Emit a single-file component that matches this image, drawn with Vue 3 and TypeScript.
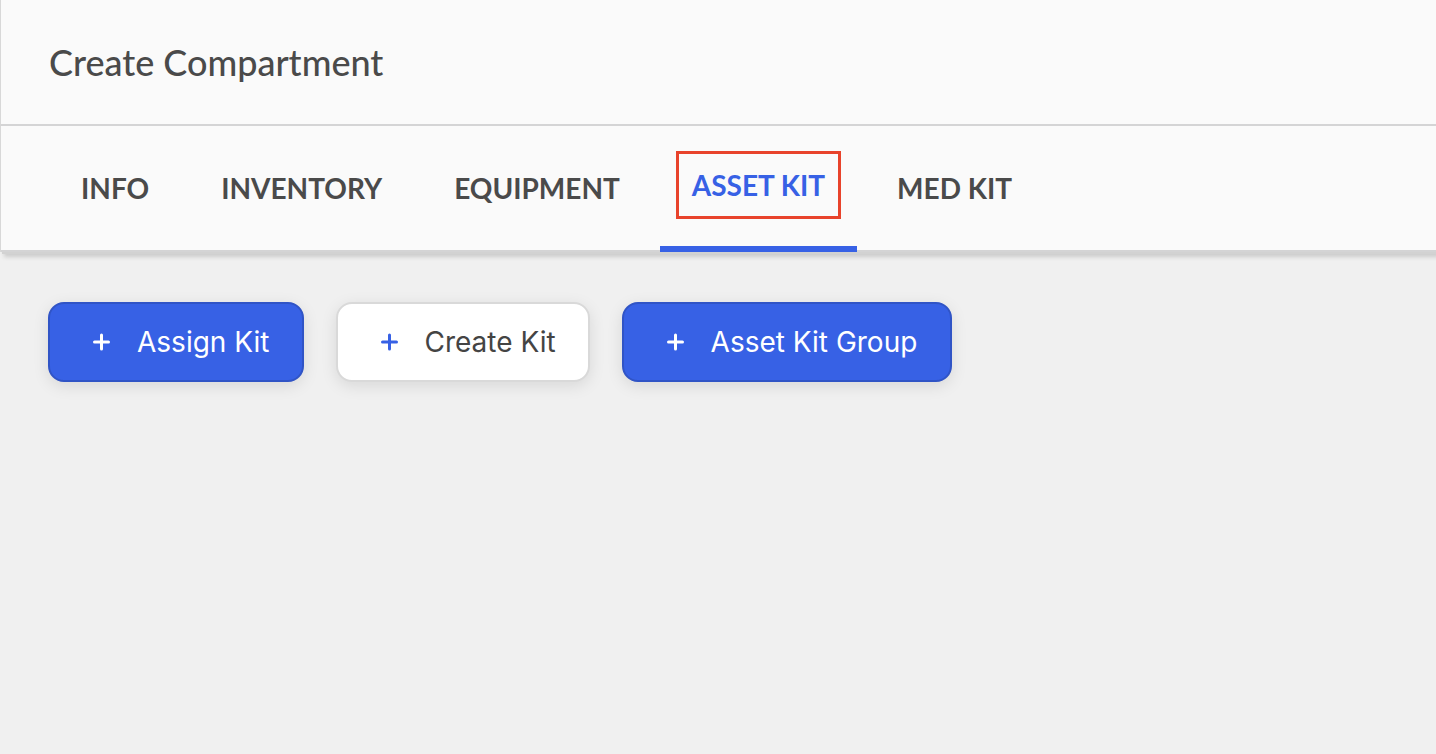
<script setup lang="ts">
import { ref } from 'vue'

const tabs = ['Info', 'Inventory', 'Equipment', 'Asset Kit', 'Med Kit']
const active = ref('Asset Kit')
const actions = [
  { label: 'Assign Kit', primary: true },
  { label: 'Create Kit', primary: false },
  { label: 'Asset Kit Group', primary: true },
]
</script>

<template>
  <main class="page">
    <header class="header">
      <h1 class="title">Create Compartment</h1>
    </header>
    <nav class="tabs">
      <button
        v-for="tab in tabs"
        :key="tab"
        type="button"
        class="tab"
        :class="{ active: tab === active }"
        @click="active = tab"
      >
        <span class="tab-label">{{ tab }}</span>
      </button>
    </nav>
    <section class="actions">
      <button
        v-for="action in actions"
        :key="action.label"
        type="button"
        class="action"
        :class="{ primary: action.primary }"
      >
        <svg class="plus" viewBox="0 0 18 18" aria-hidden="true">
          <path d="M9.5 2v14M2.5 9h14" />
        </svg>
        <span>{{ action.label }}</span>
      </button>
    </section>
  </main>
</template>

<style>
body {
  background: #f0f0f0;
}
</style>

<style scoped>
.page {
  min-height: 100vh;
  background: #f0f0f0;
  color: #4a4a4a;
  font-family: Lato, sans-serif;
}

.header {
  box-sizing: border-box;
  height: 126px;
  padding: 0 48px;
  display: flex;
  align-items: center;
  background: #fafafa;
  border-left: 1px solid #d8d8d8;
  border-bottom: 2px solid #d4d4d5;
}

.title {
  margin: 0;
  font-size: 36px;
  line-height: 44px;
  font-weight: 500;
}

.tabs {
  box-sizing: border-box;
  height: 126px;
  padding: 0 44px;
  display: flex;
  background: #fafafa;
  border-left: 1px solid #d8d8d8;
  box-shadow:
    inset 0 -2px 0 #d4d4d5,
    2px 2px 0 #d2d2d2,
    4px 5px 4px #cccccc;
}

.tab {
  padding: 0 36px 2px;
  border: 0;
  background: none;
  color: inherit;
  font-family: inherit;
  font-size: 28px;
  line-height: 34px;
  font-weight: 700;
  text-transform: uppercase;
  white-space: nowrap;
}

.tab.active {
  padding: 0 16px 2px;
  margin: 0 4px;
  color: #3761e5;
  border-bottom: 6px solid #3761e5;
}

.tab.active .tab-label {
  display: block;
  padding: 14px 13px;
  border: 3px solid #e8432b;
}

.actions {
  padding: 50px 48px;
  display: flex;
  flex-wrap: wrap;
  gap: 32px;
}

.action {
  box-sizing: border-box;
  height: 80px;
  padding: 0 32px 0 42px;
  display: flex;
  align-items: center;
  gap: 26px;
  border: 2px solid #d9d9d9;
  border-radius: 16px;
  background: #fff;
  color: #444;
  font-family: Inter, sans-serif;
  font-size: 28px;
  line-height: 36px;
  box-shadow: 0 4px 16px rgba(0, 0, 0, 0.1);
}

.action.primary {
  padding-right: 33px;
  gap: 27px;
  background: #3761e5;
  border-color: #3054c6;
  color: #fff;
}

.plus {
  width: 18px;
  height: 18px;
  fill: none;
  stroke: #3761e5;
  stroke-width: 3;
  stroke-linecap: round;
}

.primary .plus {
  stroke: #fff;
}
</style>
